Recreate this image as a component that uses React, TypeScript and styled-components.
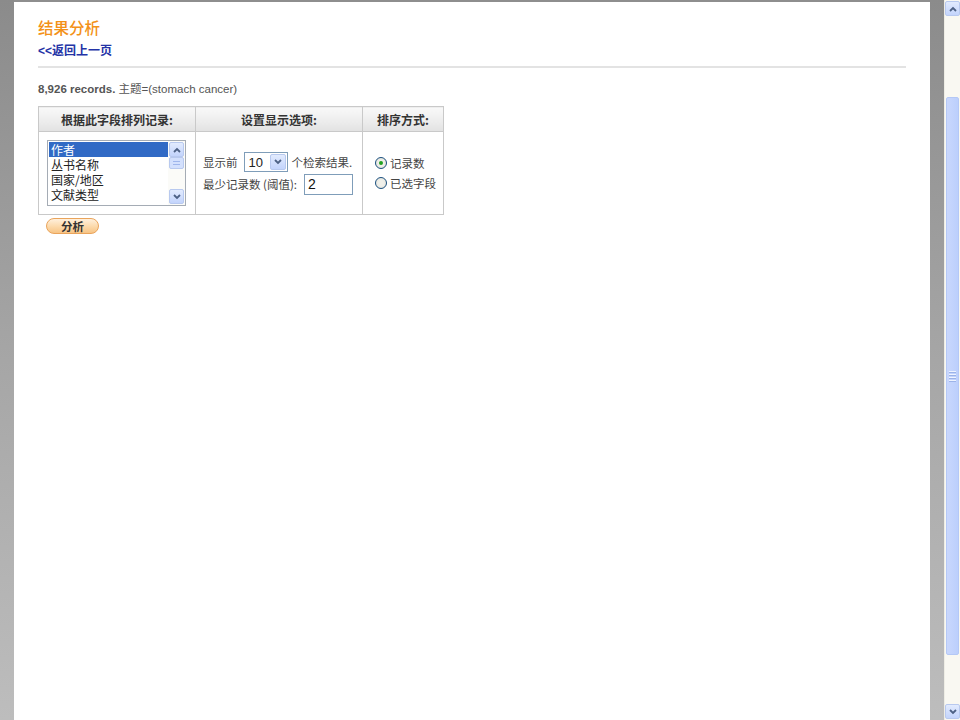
import React, { useState } from "react";
import styled, { createGlobalStyle } from "styled-components";

const GlobalStyle = createGlobalStyle`
  html, body {
    margin: 0;
    padding: 0;
    background: #ffffff;
  }
  body {
    font-family: "Liberation Sans", Arial, "Noto Sans CJK SC", sans-serif;
    font-size: 12px;
    color: #333;
  }
`;

const Frame = styled.div`
  display: flex;
  flex-direction: row;
  width: 960px;
  height: 720px;
  overflow: hidden;
`;

const Rail = styled.div`
  width: 14px;
  flex: none;
  background: linear-gradient(to bottom, #8b8b8b 0%, #a6a6a6 50%, #bdbdbd 100%);
`;

const Main = styled.main`
  flex: 1;
  background: #fff;
  border-top: 2px solid #8e8e8e;
  padding: 14px 24px 0 24px;
`;

const Title = styled.h1`
  margin: 0;
  font-family: "Noto Sans CJK SC", sans-serif;
  font-size: 15.5px;
  font-weight: 500;
  line-height: 22px;
  color: #f39118;
`;

const BackLink = styled.a`
  display: block;
  margin-top: 5px;
  font-family: "Liberation Sans", "Noto Sans CJK SC", sans-serif;
  font-size: 12px;
  font-weight: bold;
  line-height: 16px;
  color: #2433a6;
  text-decoration: none;
`;

const Rule = styled.hr`
  margin: 7px 0 0 0;
  border: none;
  height: 2px;
  background: #e3e3e3;
`;

const Summary = styled.p`
  margin: 13px 0 0 0;
  font-size: 11.5px;
  line-height: 16px;
  color: #555;
  b {
    font-weight: bold;
    color: #555;
  }
`;

const Grid = styled.table`
  margin-top: 9px;
  border-collapse: collapse;
  border: 1px solid #c9c9c9;
  font-family: "Liberation Sans", "Noto Sans CJK SC", sans-serif;
`;

const Head = styled.th<{ w: number }>`
  width: ${(p) => p.w}px;
  height: 24px;
  padding: 0;
  border: 1px solid #c9c9c9;
  background: linear-gradient(to bottom, #f9f9f9 0%, #ececec 60%, #e2e2e2 100%);
  font-family: "Noto Sans CJK SC", sans-serif;
  font-size: 12px;
  font-weight: bold;
  color: #333;
  text-align: center;
`;

const Cell = styled.td<{ pad: string }>`
  height: 82px;
  padding: ${(p) => p.pad};
  border: 1px solid #c9c9c9;
  vertical-align: middle;
`;

const ListBox = styled.div`
  display: flex;
  width: 137px;
  height: 64px;
  border: 1px solid #a5acb5;
  background: #fff;
`;

const ListItems = styled.ul`
  flex: 1;
  margin: 0;
  padding: 1px 0 0 1px;
  list-style: none;
`;

const ListItem = styled.li<{ selected?: boolean }>`
  height: 15px;
  line-height: 15px;
  padding-left: 2px;
  overflow: hidden;
  font-family: "Noto Sans CJK SC", sans-serif;
  font-size: 12px;
  color: ${(p) => (p.selected ? "#fff" : "#222")};
  background: ${(p) => (p.selected ? "#316ac5" : "transparent")};
  cursor: default;
`;

const MiniScroll = styled.div`
  width: 17px;
  display: flex;
  flex-direction: column;
  background: #fbfbf8;
`;

const ArrowBtn = styled.div<{ size: number }>`
  width: ${(p) => p.size}px;
  height: ${(p) => p.size}px;
  margin: 1px auto 0;
  border: 1px solid #b8c9ef;
  border-radius: 2px;
  background: linear-gradient(to bottom, #e2ebfe 0%, #c3d4fc 100%);
  box-sizing: border-box;
  display: flex;
  align-items: center;
  justify-content: center;
`;

const Thumb = styled.div`
  width: 15px;
  height: 12px;
  margin: 0 auto;
  border: 1px solid #b8c9ef;
  border-radius: 2px;
  box-sizing: border-box;
  background: #d3e0fd;
  display: flex;
  flex-direction: column;
  justify-content: center;
  gap: 2px;
  padding: 0 3px;
  span {
    display: block;
    height: 1px;
    background: #9fb6ec;
  }
`;

const Spacer = styled.div`
  flex: 1;
`;

const OptionLine = styled.div`
  display: flex;
  align-items: center;
  gap: 4px;
  height: 21px;
  font-family: "Noto Sans CJK SC", sans-serif;
  font-size: 11.5px;
  color: #444;
  & + & {
    margin-top: 1px;
  }
`;

const DropSelect = styled.div`
  display: flex;
  align-items: center;
  width: 44px;
  height: 20px;
  margin-left: 2px;
  border: 1px solid #7f9db9;
  box-sizing: border-box;
  background: #fff;
  font-family: "Liberation Sans", sans-serif;
  font-size: 13px;
  color: #222;
  span {
    flex: 1;
    padding-left: 4px;
  }
`;

const NumInput = styled.input`
  width: 49px;
  height: 21px;
  margin-left: 3px;
  box-sizing: border-box;
  border: 1px solid #7f9db9;
  padding: 0 3px;
  font-family: "Liberation Sans", sans-serif;
  font-size: 14px;
  color: #111;
  outline: none;
`;

const RadioRow = styled.label`
  display: flex;
  align-items: center;
  gap: 3px;
  height: 16px;
  font-family: "Noto Sans CJK SC", sans-serif;
  font-size: 11.5px;
  color: #444;
  cursor: pointer;
  & + & {
    margin-top: 4px;
  }
`;

const RadioDot = styled.span<{ on: boolean }>`
  width: 12px;
  height: 12px;
  border-radius: 50%;
  box-sizing: border-box;
  border: 1px solid #1c5180;
  background: radial-gradient(circle, #f0f0ea 40%, #dcdcd4 100%);
  display: flex;
  align-items: center;
  justify-content: center;
  &::after {
    content: "";
    display: ${(p) => (p.on ? "block" : "none")};
    width: 4px;
    height: 4px;
    border-radius: 50%;
    background: #21a121;
  }
`;

const AnalyzeButton = styled.button`
  display: block;
  margin: 3px 0 0 8px;
  width: 53px;
  height: 16px;
  padding: 0;
  border: 1px solid #eaa45b;
  border-radius: 8px;
  background: linear-gradient(to bottom, #fff0dc 0%, #fcd9aa 55%, #f7c485 100%);
  font-family: "Noto Sans CJK SC", sans-serif;
  font-size: 11.5px;
  font-weight: bold;
  line-height: 14px;
  color: #333;
  cursor: pointer;
`;

const PageScroll = styled.div`
  width: 16px;
  flex: none;
  display: flex;
  flex-direction: column;
  background: #f9f8f2;
  border-left: 1px solid #eeede5;
  box-sizing: border-box;
`;

const PageThumb = styled.div`
  margin: 81px 1px 0 1px;
  height: 556px;
  border: 1px solid #b4c8f6;
  border-radius: 2px;
  background: linear-gradient(to right, #c9d7fd 0%, #bccffc 100%);
  display: flex;
  flex-direction: column;
  justify-content: center;
  align-items: center;
  gap: 2px;
  span {
    display: block;
    width: 7px;
    height: 1px;
    background: #eef3ff;
    box-shadow: 0 1px 0 #9cb3e8;
  }
`;

const Chevron = ({ up }: { up?: boolean }) => (
  <svg width="8" height="6" viewBox="0 0 8 6">
    <path
      d={up ? "M1 5 L4 2 L7 5" : "M1 1 L4 4 L7 1"}
      fill="none"
      stroke="#4d6185"
      strokeWidth="1.8"
    />
  </svg>
);

const fields = ["作者", "丛书名称", "国家/地区", "文献类型"];

export default function App() {
  const [field, setField] = useState("作者");
  const [sortBy, setSortBy] = useState("count");
  const [threshold, setThreshold] = useState("2");

  return (
    <>
      <GlobalStyle />
      <Frame>
        <Rail />
        <Main>
          <Title>结果分析</Title>
          <BackLink href="#">&lt;&lt;返回上一页</BackLink>
          <Rule />
          <Summary>
            <b>8,926 records.</b> 主题=(stomach cancer)
          </Summary>
          <Grid>
            <thead>
              <tr>
                <Head w={156}>根据此字段排列记录:</Head>
                <Head w={166}>设置显示选项:</Head>
                <Head w={80}>排序方式:</Head>
              </tr>
            </thead>
            <tbody>
              <tr>
                <Cell pad="0 0 0 8px">
                  <ListBox>
                    <ListItems>
                      {fields.map((f) => (
                        <ListItem
                          key={f}
                          selected={f === field}
                          onClick={() => setField(f)}
                        >
                          {f}
                        </ListItem>
                      ))}
                    </ListItems>
                    <MiniScroll>
                      <ArrowBtn size={15}>
                        <Chevron up />
                      </ArrowBtn>
                      <Thumb>
                        <span />
                        <span />
                      </Thumb>
                      <Spacer />
                      <ArrowBtn size={15} style={{ marginBottom: 1 }}>
                        <Chevron />
                      </ArrowBtn>
                    </MiniScroll>
                  </ListBox>
                </Cell>
                <Cell pad="0 0 0 7px">
                  <OptionLine>
                    显示前
                    <DropSelect>
                      <span>10</span>
                      <ArrowBtn size={16} style={{ margin: "0 1px 0 0" }}>
                        <Chevron />
                      </ArrowBtn>
                    </DropSelect>
                    个检索结果.
                  </OptionLine>
                  <OptionLine>
                    最少记录数 (阈值):
                    <NumInput
                      value={threshold}
                      onChange={(e) => setThreshold(e.target.value)}
                    />
                  </OptionLine>
                </Cell>
                <Cell pad="0 0 0 12px">
                  <RadioRow onClick={() => setSortBy("count")}>
                    <RadioDot on={sortBy === "count"} />
                    记录数
                  </RadioRow>
                  <RadioRow onClick={() => setSortBy("field")}>
                    <RadioDot on={sortBy === "field"} />
                    已选字段
                  </RadioRow>
                </Cell>
              </tr>
            </tbody>
          </Grid>
          <AnalyzeButton>分析</AnalyzeButton>
        </Main>
        <Rail />
        <PageScroll>
          <ArrowBtn size={15}>
            <Chevron up />
          </ArrowBtn>
          <PageThumb>
            <span />
            <span />
            <span />
            <span />
          </PageThumb>
          <Spacer />
          <ArrowBtn size={15} style={{ marginBottom: 1 }}>
            <Chevron />
          </ArrowBtn>
        </PageScroll>
      </Frame>
    </>
  );
}
